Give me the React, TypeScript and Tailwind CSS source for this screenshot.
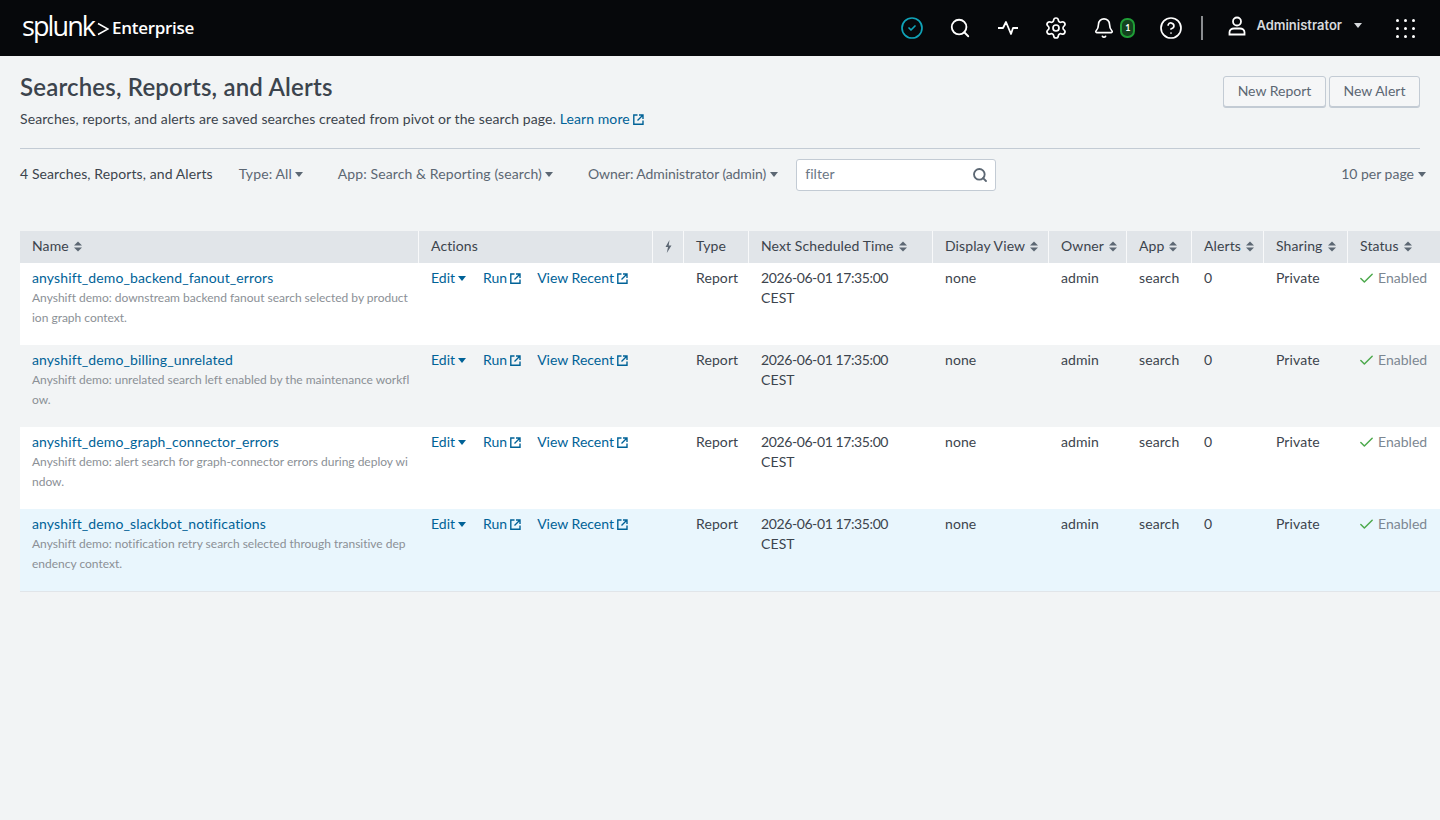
import React from "react";
import { Search, Settings, Bell, CircleHelp, Check, CircleCheck } from "lucide-react";

const F = "font-['Lato','Liberation_Sans',sans-serif]";

function Sort() {
  return (
    <svg width="8" height="11" viewBox="0 0 8 11" className="inline-block ml-[5px] align-[-1px] text-[#5c6773]" fill="currentColor">
      <path d="M4 0.5 8 4.5H0z" />
      <path d="M4 10.5 0 6.5h8z" />
    </svg>
  );
}
function Caret({ cls = "ml-[4px]" }: { cls?: string }) {
  return (
    <svg width="8" height="5" viewBox="0 0 8 5" className={"inline-block align-[2px] " + cls} fill="currentColor">
      <path d="M0 0h8L4 5z" />
    </svg>
  );
}
function Ext() {
  return (
    <svg width="11" height="11" viewBox="0 0 11 11" className="inline-block ml-[3px] align-[-0.5px]" fill="none" stroke="currentColor" strokeWidth="1.4">
      <path d="M4.500 1H.8v9.200H10V6.500" />
      <path d="M6 1h4v4M10 1 4.500 6.500" />
    </svg>
  );
}

const rows = [
  ["anyshift_demo_backend_fanout_errors", "Anyshift demo: downstream backend fanout search selected by product", "ion graph context.", "bg-white"],
  ["anyshift_demo_billing_unrelated", "Anyshift demo: unrelated search left enabled by the maintenance workfl", "ow.", "bg-[#f2f4f5]"],
  ["anyshift_demo_graph_connector_errors", "Anyshift demo: alert search for graph-connector errors during deploy wi", "ndow.", "bg-white"],
  ["anyshift_demo_slackbot_notifications", "Anyshift demo: notification retry search selected through transitive dep", "endency context.", "bg-[#e9f6fd]"],
];

const cols = "grid grid-cols-[399px_234px_31px_65px_184px_116px_78px_65px_72px_84px_92px]";
const heads: [string, boolean][] = [
  ["Name", true], ["Actions", false], ["", false], ["Type", false], ["Next Scheduled Time", true],
  ["Display View", true], ["Owner", true], ["App", true], ["Alerts", true], ["Sharing", true], ["Status", true],
];

export default function App() {
  return (
    <div className={`${F} min-h-[820px] bg-[#f2f4f5] text-[14px] leading-[20px] tracking-[0.1px] text-[#3c444d] overflow-hidden`}>
      <header className="h-[56px] bg-[#06080b] flex items-center text-white">
        <div className="ml-[22px] flex items-center">
          <span className="text-[27px] leading-[32px] tracking-[-1.9px] font-medium font-['Open_Sans',sans-serif] pb-[4px]">splunk</span>
          <svg width="12" height="14" viewBox="0 0 12 14" className="ml-[3px] mt-[2px]" fill="none" stroke="white" strokeWidth="1.5"><path d="M1 1.500 11 7 1 12.500" /></svg>
          <span className="ml-[3px] text-[17px] font-['Open_Sans',sans-serif] font-semibold tracking-[-0.3px]">Enterprise</span>
        </div>
        <div className="ml-auto flex items-center">
          <CircleCheck size={24} strokeWidth={1.7} className="text-[#10a3b8]" />
          <Search size={22} strokeWidth={2} className="ml-[25px]" />
          <svg width="20" height="14" viewBox="0 0 20 14" fill="none" stroke="white" strokeWidth="1.8" strokeLinejoin="round" className="ml-[27px] mr-[2px]">
            <path d="M0 7h5l3-6 5 12 2-6h5" />
          </svg>
          <Settings size={24} strokeWidth={1.7} className="ml-[24px]" />
          <Bell size={22} strokeWidth={1.8} className="ml-[25px]" />
          <span className="ml-[5px] w-[15px] h-[20px] rounded-[7px] border-2 border-[#1f9d36] bg-[#14431f] text-[9px] leading-[16px] text-center font-bold">1</span>
          <CircleHelp size={24} strokeWidth={1.7} className="ml-[24px]" />
          <div className="ml-[18px] w-[2px] h-[24px] bg-[#8a8d90]" />
          <svg width="18" height="20" viewBox="0 0 18 20" fill="none" stroke="white" strokeWidth="1.8" className="ml-[25px] mb-[4px]">
            <circle cx="9" cy="5.500" r="4" />
            <path d="M1.500 18.500v-2.200C1.500 14 3.500 12.500 6 12.500h6c2.500 0 4.500 1.500 4.500 3.800v2.200z" />
          </svg>
          <span className="ml-[10px] mb-[6px] font-['Inter',sans-serif] text-[13px] tracking-normal font-semibold text-[#d7dadd]">Administrator</span>
          <Caret cls="ml-[12px] mb-[5px] text-[#d7dadd]" />
          <div className="ml-[34px] mr-[25px] grid grid-cols-3 gap-x-[5px] gap-y-[5px]">
            {Array.from({ length: 9 }).map((_, i) => <span key={i} className="w-[3px] h-[3px] rounded-full bg-white" />)}
          </div>
        </div>
      </header>

      <section className="px-[20px] pt-[19px] flex justify-between">
        <div>
          <h1 className="text-[24px] leading-[24px] font-semibold tracking-[0.18px] text-[#3c444d] mb-[10px]">Searches, Reports, and Alerts</h1>
          <p>Searches, reports, and alerts are saved searches created from pivot or the search page. <a className="text-[#006297]">Learn more<Ext /></a></p>
        </div>
        <div className="flex gap-[3px] items-start pt-[1px]">
          <button className="h-[31px] w-[103px] pb-[2px] tracking-normal border border-[#c3cbd4] rounded-[3px] bg-[#f5f6f7] shadow-[0_1px_0_#c3cbd4] text-[#5c6773]">New Report</button>
          <button className="h-[31px] w-[91px] pb-[2px] tracking-normal border border-[#c3cbd4] rounded-[3px] bg-[#f5f6f7] shadow-[0_1px_0_#c3cbd4] text-[#5c6773]">New Alert</button>
        </div>
      </section>

      <div className="mx-[20px] mt-[19px] border-t border-[#c3cbd4] h-[11px]" />

      <section className="pl-[20px] pr-[14px] flex items-center h-[32px]">
        <span className="pb-[2px]">4 Searches, Reports, and Alerts</span>
        <span className="pb-[2px] ml-[26px] text-[#5c6773]">Type: All<Caret cls="ml-[3px]" /></span>
        <span className="pb-[2px] ml-[35px] text-[#5c6773]">App: Search &amp; Reporting (search)<Caret cls="ml-[3px]" /></span>
        <span className="pb-[2px] ml-[35px] tracking-[-0.1px] text-[#5c6773]">Owner: Administrator (admin)<Caret /></span>
        <div className="ml-[18px] w-[200px] h-[32px] bg-white border border-[#c3cbd4] rounded-[3px] flex items-center justify-between pl-[8px] pr-[7px] text-[#6b7785]">
          <span className="pb-[2px]">filter</span>
          <Search size={16} strokeWidth={2.8} className="text-[#5c6773]" />
        </div>
        <span className="pb-[2px] ml-auto tracking-normal text-[#5c6773]">10 per page<Caret /></span>
      </section>

      <section className="ml-[20px] mt-[40px]">
        <div className={`${cols} h-[32px]`}>
          {heads.map(([h, s], i) => (
            <div key={i} className={`bg-[#e1e5e9] flex items-center pl-[12px] pb-[2px] text-[#3c444d] whitespace-nowrap ${i < heads.length - 1 ? "border-r border-[#f8f9fa]" : ""}`}>
              {i === 2 ? (
                <svg width="7" height="13" viewBox="0 0 7 13" fill="#5c6773"><path d="M4.500 0 .5 7H3L1.800 13 6.500 5.500H3.700z" /></svg>
              ) : (
                <span>{h}{s && <Sort />}</span>
              )}
            </div>
          ))}
        </div>
        <div className="border-b border-[#e1e5e9]">
        {rows.map(([n, a, b, bg]) => (
          <div key={n} className={`${cols} h-[82px] ${bg} pt-[5px]`}>
            <div className="pl-[12px] pr-[10px]">
              <a className="block tracking-[0.12px] text-[#006297]">{n}</a>
              <div className="text-[12px] tracking-[-0.01px] leading-[20px] text-[#8b9096] whitespace-nowrap">{a}<br />{b}</div>
            </div>
            <div className="pl-[12px] tracking-normal text-[#006297] whitespace-nowrap">
              <span>Edit<Caret cls="ml-[3px]" /></span>
              <span className="ml-[17px]">Run<Ext /></span>
              <span className="ml-[16px]">View Recent<Ext /></span>
            </div>
            <div />
            <div className="pl-[12px]">Report</div>
            <div className="pl-[12px] tracking-[-0.4px]">2026-06-01 17:35:00<br /><span className="tracking-[0.1px]">CEST</span></div>
            <div className="pl-[12px]">none</div>
            <div className="pl-[12px]">admin</div>
            <div className="pl-[12px]">search</div>
            <div className="pl-[12px]">0</div>
            <div className="pl-[12px]">Private</div>
            <div className="pl-[12px] whitespace-nowrap tracking-[0.02px] text-[#7c8792] flex items-start">
              <Check size={17} strokeWidth={2.1} className="text-[#4ca94c] mt-[2px] ml-[-2px] mr-[3px]" />Enabled
            </div>
          </div>
        ))}
        </div>
      </section>
    </div>
  );
}
